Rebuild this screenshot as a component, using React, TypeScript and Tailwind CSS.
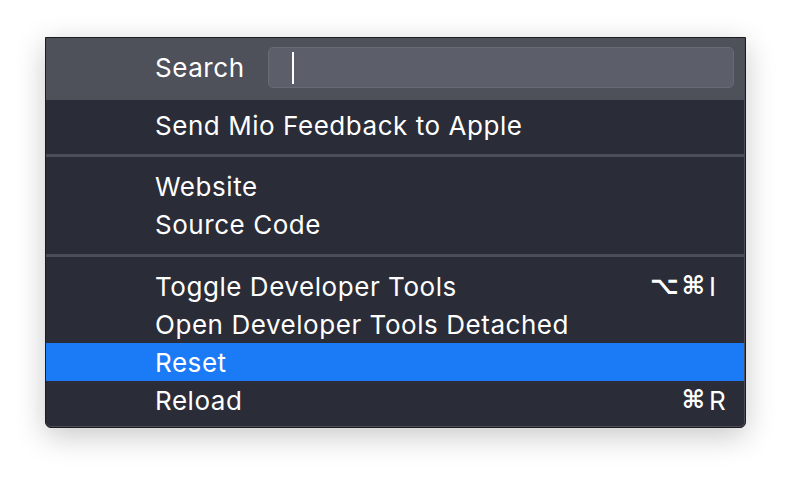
const FONT = '"Inter", "Liberation Sans", "DejaVu Sans", sans-serif';

type Item = {
  label: string;
  mods?: string;
  keyChar?: string;
  active?: boolean;
};

const groups: Item[][] = [
  [{ label: "Send Mio Feedback to Apple" }],
  [{ label: "Website" }, { label: "Source Code" }],
  [
    { label: "Toggle Developer Tools", mods: "⌥⌘", keyChar: "I" },
    { label: "Open Developer Tools Detached" },
    { label: "Reset", active: true },
    { label: "Reload", mods: "⌘", keyChar: "R" },
  ],
];

const MenuRow = ({ item }: { item: Item }) => (
  <div
    className={`flex h-[38px] items-center pl-[109px] pr-[13px] text-[26px] text-white ${
      item.active ? "bg-[#1b7af5]" : ""
    }`}
  >
    <span className="flex-1 tracking-[0.55px]">{item.label}</span>
    {item.keyChar && (
      <span className="flex items-center">
        <span
          className="text-right text-[25px] font-bold tracking-[3px]"
          style={{ fontFamily: '"DejaVu Sans", sans-serif' }}
        >
          {item.mods}
        </span>
        <span className="ml-[1px] w-[22px]">{item.keyChar}</span>
      </span>
    )}
  </div>
);

const Separator = ({ h }: { h: string }) => (
  <div className={`flex items-center ${h}`}>
    <div className="h-[3px] w-full bg-[#4b4d57]" />
  </div>
);

export default function App() {
  return (
    <div
      className="min-h-screen bg-white pl-[45px] pt-[37px]"
      style={{ fontFamily: FONT }}
    >
      <div className="w-[701px] overflow-hidden rounded-b-[6px] border border-[#1c1c20] bg-[#2a2c37] shadow-[0_8px_30px_rgba(0,0,0,0.22)]">
        <div className="border-r border-b border-[#4a4c56] rounded-b-[5px]">
          {/* search */}
          <div className="flex h-[62px] items-start bg-[#4e505a] pt-[9px] pl-[109px] pr-[10px]">
            <span className="h-[41px] w-[113px] text-[26px] leading-[41px] tracking-[0.55px] text-white">
              Search
            </span>
            <div className="relative h-[41px] flex-1 rounded-[5px] border border-[#686a76] bg-[#5c5e6a]">
              <div className="absolute left-[23px] top-[4px] h-[32px] w-[2px] bg-white" />
            </div>
          </div>

          <div className="pt-[6px] pb-[7px]">
            {groups.map((g, gi) => (
              <div key={gi}>
                {gi > 0 && <Separator h={gi === 1 ? "h-[23px]" : "h-[24px]"} />}
                {g.map((it) => (
                  <MenuRow key={it.label} item={it} />
                ))}
              </div>
            ))}
          </div>
        </div>
      </div>
    </div>
  );
}
